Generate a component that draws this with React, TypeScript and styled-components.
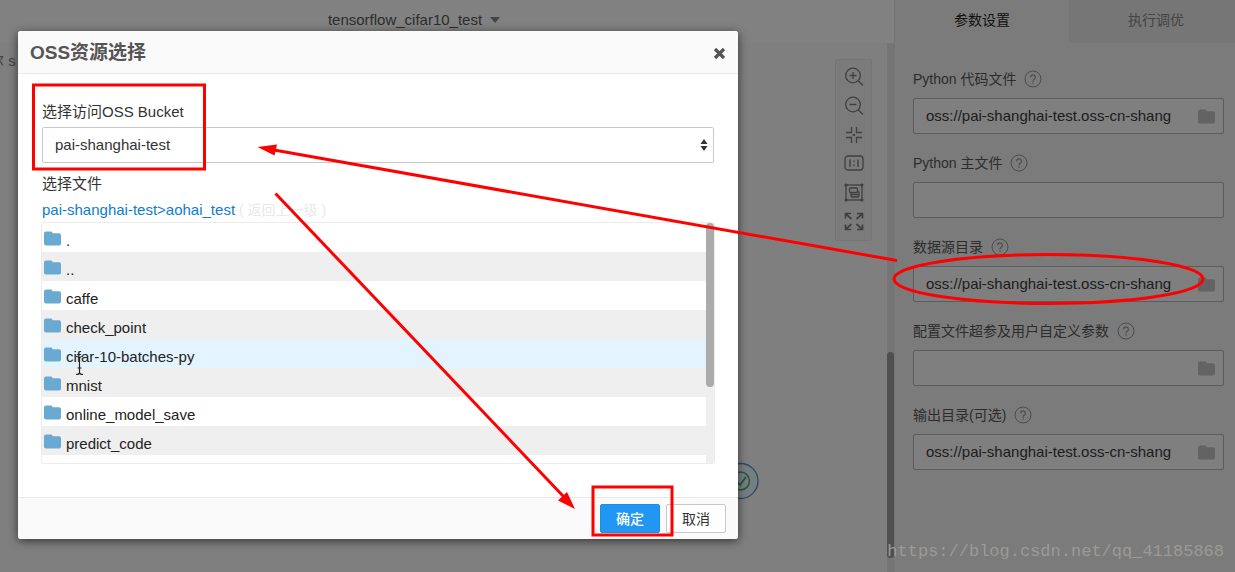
import React from "react";
import styled, { createGlobalStyle } from "styled-components";

const GlobalStyle = createGlobalStyle`
  *, *::before, *::after { box-sizing: border-box; }
  body {
    margin: 0;
    background: #7f7f7f;
    font-family: "Liberation Sans", "Noto Sans CJK SC", sans-serif;
    font-size: 15px;
    line-height: 20px;
    color: #222;
  }
  button, input, select { font: inherit; color: inherit; }
`;

const Page = styled.div`
  position: relative;
  display: flex;
  min-height: 100vh;
  overflow: hidden;
`;

/* ---------- workspace ---------- */

const Workspace = styled.main`
  flex: 1;
  min-width: 0;
  display: flex;
  flex-direction: column;
`;

const TopBar = styled.header`
  height: 43px;
  display: flex;
  align-items: center;
  justify-content: center;
  padding: 0 66px 3px 0;
  background: #818181;
`;

const ExperimentButton = styled.button`
  display: flex;
  align-items: center;
  gap: 8px;
  padding: 0;
  border: 0;
  background: none;
  color: #2c2c2c;
`;

const Caret = styled.span`
  border: 5px solid transparent;
  border-top: 6px solid #444;
  border-bottom: 0;
`;

const Canvas = styled.section`
  position: relative;
  flex: 1;
  display: flex;
  justify-content: space-between;
  align-items: stretch;
  background: #7f7f7f;
`;

const TreeLabel = styled.span`
  margin: 8px 0 0 -11px;
  color: #444;
  white-space: pre;
`;

const CanvasTools = styled.div`
  display: flex;
  gap: 15px;
`;

const Palette = styled.div`
  align-self: flex-start;
  width: 37px;
  margin-top: 16px;
  padding: 2px 0 4px;
  display: flex;
  flex-direction: column;
  background: #7b7b7b;
  border: 1px solid #757575;
  border-radius: 2px;
`;

const ToolButton = styled.button`
  height: 29px;
  display: grid;
  place-items: center;
  padding: 0;
  border: 0;
  background: none;
  color: #404040;
`;

const CanvasTrack = styled.div`
  width: 7px;
  display: flex;
  flex-direction: column;
  justify-content: flex-end;
  padding-bottom: 14px;
  background: #757575;
`;

const CanvasThumb = styled.div`
  height: 206px;
  border-radius: 4px;
  background: #4f4f4f;
`;

const NodeEnd = styled.svg`
  position: absolute;
  left: 720px;
  top: 418px;
`;

/* ---------- settings panel ---------- */

const Panel = styled.aside`
  flex: 0 0 341px;
  overflow: hidden;
  background: #7b7b7b;
  border-left: 1px solid #757575;
`;

const Tabs = styled.div`
  display: flex;
  height: 43px;
`;

const Tab = styled.button<{ $active?: boolean }>`
  flex: 0 0 174px;
  padding: 0 0 4px;
  border: 0;
  font-size: 14px;
  background: ${(p) => (p.$active ? "#7b7b7b" : "#767676")};
  color: ${(p) => (p.$active ? "#111" : "#444")};
`;

const Form = styled.form`
  display: flex;
  flex-direction: column;
  gap: 19px;
  padding: 26px 11px 30px 18px;
`;

const Field = styled.div`
  display: flex;
  flex-direction: column;
  gap: 9px;
`;

const FieldHead = styled.div`
  display: flex;
  align-items: center;
  gap: 8px;
  height: 20px;
  font-size: 14px;
  color: #2c2c2c;
`;

const InputFrame = styled.div`
  display: flex;
  align-items: center;
  height: 36px;
  padding: 0 8px 0 12px;
  background: #7f7f7f;
  border: 1px solid #5c5c5c;
  border-radius: 2px;
  color: #636363;
`;

const TextInput = styled.input`
  flex: 1;
  min-width: 0;
  padding: 0;
  border: 0;
  outline: 0;
  background: none;
  color: #1c1c1c;
`;

const Watermark = styled.div`
  position: absolute;
  right: 11px;
  bottom: 10px;
  font-family: "Liberation Mono", monospace;
  font-size: 17px;
  color: #9b9a97;
`;

/* ---------- dialog ---------- */

const Overlay = styled.div`
  position: absolute;
  inset: 0;
  padding: 31px 18px;
`;

const Dialog = styled.div`
  width: 720px;
  max-width: 100%;
  background: #fff;
  border-radius: 3px;
  box-shadow: 0 2px 10px rgba(0, 0, 0, 0.6);
  overflow: hidden;
`;

const DialogHeader = styled.header`
  display: flex;
  align-items: center;
  justify-content: space-between;
  height: 43px;
  padding: 2px 12px 0;
  background: #fafafa;
  border-bottom: 1px solid #e9e9e9;
`;

const DialogTitle = styled.h2`
  margin: 0;
  font-size: 19px;
  line-height: 24px;
  color: #555;
`;

const CloseButton = styled.button`
  display: grid;
  padding: 0;
  border: 0;
  background: none;
  color: #555;
`;

const DialogBody = styled.div`
  display: flex;
  flex-direction: column;
  padding: 28px 24px 34px;
`;

const DialogLabel = styled.label`
  margin-bottom: 5px;
  color: #333;
`;

const SelectFrame = styled.div`
  display: grid;
  margin-bottom: 11px;

  > * { grid-area: 1 / 1; }

  > svg {
    align-self: center;
    justify-self: end;
    margin-right: 6px;
    pointer-events: none;
  }
`;

const BucketSelect = styled.select`
  appearance: none;
  height: 36px;
  padding: 0 12px;
  border: 1px solid #c8c8c8;
  border-radius: 2px;
  background: #fff;
  color: #333;
`;

const PathLine = styled.div`
  display: flex;
  gap: 4px;
  margin: 1px 0 3px;
  white-space: pre;
`;

const PathLink = styled.a`
  color: #0f7ccf;
  text-decoration: none;
`;

const BackLink = styled.a`
  font-size: 14px;
  color: #e9e9e9;
  text-decoration: none;
`;

const FileBox = styled.div`
  display: flex;
  height: 240px;
  overflow: hidden;
  border-radius: 2px;
  box-shadow: 0 0 0 1px #ececec;
`;

const FileList = styled.ul`
  flex: 1;
  margin: 0;
  padding: 0;
  list-style: none;
`;

const FileRow = styled.li<{ $hover?: boolean }>`
  background: ${(p) => (p.$hover ? "#e3f4ff" : "#fff")};

  &:nth-child(even) { background: #efefef; }
`;

const FileButton = styled.button`
  display: flex;
  align-items: center;
  gap: 5px;
  width: 100%;
  height: 29px;
  padding: 6px 2px 0;
  border: 0;
  background: none;
  color: #222;

  > svg {
    margin-bottom: 5px;
    color: #6aa9d1;
  }
`;

const ListTrack = styled.div`
  width: 8px;
  background: #efefef;
`;

const ListThumb = styled.div`
  height: 164px;
  border-radius: 4px;
  background: #ababab;
`;

const DialogFooter = styled.footer`
  display: flex;
  justify-content: flex-end;
  gap: 6px;
  padding: 6px 12px;
  background: #fafafa;
  border-top: 1px solid #e9e9e9;
`;

const ActionButton = styled.button<{ $primary?: boolean }>`
  width: 60px;
  height: 29px;
  padding: 0;
  border: 1px solid ${(p) => (p.$primary ? "#1c8ee6" : "#c8c8c8")};
  border-radius: 2px;
  background: ${(p) => (p.$primary ? "#1f97f3" : "#fff")};
  color: ${(p) => (p.$primary ? "#fff" : "#333")};
  font-weight: ${(p) => (p.$primary ? 500 : 400)};
  font-size: 14px;
`;

const Markup = styled.svg`
  position: absolute;
  left: 0;
  top: 0;
  pointer-events: none;
`;

/* ---------- icons ---------- */

const FolderIcon = () => (
  <svg width="17" height="15" viewBox="0 0 17 15" fill="currentColor" aria-hidden="true">
    <path d="M2 .5h5q1 0 1.300 1l.3.7H15q2 0 2 2v8.300q0 2-2 2H2q-2 0-2-2v-10q0-2 2-2z" />
  </svg>
);

const HelpIcon = () => (
  <svg width="18" height="18" viewBox="0 0 18 18" fill="none" stroke="#4c4c4c" aria-hidden="true">
    <circle cx="9" cy="9" r="8" />
    <path d="M6.600 7.200a2.400 2.400 0 1 1 3.600 2.100c-.8.5-1.200.9-1.200 1.900" strokeWidth="1.200" />
    <circle cx="9" cy="13" r=".8" fill="#4c4c4c" stroke="none" />
  </svg>
);

const ToolSvg = ({ children }: { children: React.ReactNode }) => (
  <svg
    width="20"
    height="20"
    viewBox="0 0 20 20"
    fill="none"
    stroke="currentColor"
    strokeWidth="1.300"
    aria-hidden="true"
  >
    {children}
  </svg>
);

const tools = [
  {
    name: "放大",
    icon: (
      <>
        <circle cx="9" cy="8.500" r="7.300" />
        <path d="M14 13.500l5 5M9 5v7M5.500 8.500h7" />
      </>
    ),
  },
  {
    name: "缩小",
    icon: (
      <>
        <circle cx="9" cy="8.500" r="7.300" />
        <path d="M14 13.500l5 5M5.500 8.500h7" />
      </>
    ),
  },
  {
    name: "居中",
    icon: (
      <>
        <path d="M7.500 2v5.500H2M12.500 2v5.500H18M7.500 18v-5.500H2M12.500 18v-5.500H18" />
        <circle cx="10" cy="10" r="1.200" fill="currentColor" stroke="none" />
      </>
    ),
  },
  {
    name: "原始比例",
    icon: (
      <>
        <rect x="1" y="2" width="18" height="14" rx="3" />
        <path d="M6 5.500V13M14 5.500V13" strokeWidth="1.400" />
        <path d="M10 6.500V8M10 10.500V12" strokeWidth="1.400" />
      </>
    ),
  },
  {
    name: "适应画布",
    icon: (
      <>
        <rect x="2" y="2" width="16" height="15" />
        <rect x="5.500" y="5" width="8" height="4.500" rx="1" />
        <path d="M13.500 8.500q1.500 0 1.500 1v3.500q0 1-1 1H8q-1 0-1-1V9.500M7 11.500h8" />
        <g fill="currentColor" stroke="none">
          <circle cx="2" cy="2" r="1.600" />
          <circle cx="18" cy="2" r="1.600" />
          <circle cx="2" cy="17" r="1.600" />
          <circle cx="18" cy="17" r="1.600" />
        </g>
      </>
    ),
  },
  {
    name: "全屏",
    icon: (
      <path
        d="M1.500 6.500V1.500H7M1.500 1.500l6 5.500M13 1.500h5.500V6.500M18.500 1.500l-6 5.500M1.500 12.500v5H7M1.500 17.500l6-5.500M13 17.500h5.500v-5M18.500 17.500l-6-5.500"
        strokeWidth="1.700"
      />
    ),
  },
];

/* ---------- data ---------- */

const ossPath = "oss://pai-shanghai-test.oss-cn-shang";

const fields = [
  { id: "code", label: "Python 代码文件", value: ossPath, browse: true },
  { id: "main", label: "Python 主文件", value: "", browse: false },
  { id: "source", label: "数据源目录", value: ossPath, browse: true },
  { id: "config", label: "配置文件超参及用户自定义参数", value: "", browse: true },
  { id: "output", label: "输出目录(可选)", value: ossPath, browse: true },
];

const files = [
  ".",
  "..",
  "caffe",
  "check_point",
  "cifar-10-batches-py",
  "mnist",
  "online_model_save",
  "predict_code",
];

export default function App() {
  return (
    <Page>
      <GlobalStyle />
      <Workspace>
        <TopBar>
          <ExperimentButton>
            tensorflow_cifar10_test
            <Caret />
          </ExperimentButton>
        </TopBar>
        <Canvas>
          <TreeLabel>尔 s</TreeLabel>
          <NodeEnd width="40" height="40" viewBox="0 0 40 40" fill="none" aria-hidden="true">
            <circle cx="20.500" cy="20" r="17.500" fill="#777e82" stroke="#264d66" strokeWidth="1.300" />
            <circle cx="20.500" cy="20" r="9" stroke="#22593d" strokeWidth="1.500" />
            <path d="M16 20l4 4 6-8" stroke="#22593d" strokeWidth="1.800" />
          </NodeEnd>
          <CanvasTools>
            <Palette>
              {tools.map((t) => (
                <ToolButton key={t.name} aria-label={t.name}>
                  <ToolSvg>{t.icon}</ToolSvg>
                </ToolButton>
              ))}
            </Palette>
            <CanvasTrack>
              <CanvasThumb />
            </CanvasTrack>
          </CanvasTools>
        </Canvas>
      </Workspace>

      <Panel>
        <Tabs>
          <Tab $active>参数设置</Tab>
          <Tab>执行调优</Tab>
        </Tabs>
        <Form>
          {fields.map((f) => (
            <Field key={f.id}>
              <FieldHead>
                <label htmlFor={f.id}>{f.label}</label>
                <HelpIcon />
              </FieldHead>
              <InputFrame>
                <TextInput id={f.id} type="text" defaultValue={f.value} />
                {f.browse && <FolderIcon />}
              </InputFrame>
            </Field>
          ))}
        </Form>
      </Panel>
      <Watermark>https://blog.csdn.net/qq_41185868</Watermark>

      <Overlay>
        <Dialog role="dialog" aria-labelledby="dialog-title">
          <DialogHeader>
            <DialogTitle id="dialog-title">OSS资源选择</DialogTitle>
            <CloseButton aria-label="关闭">
              <svg width="13" height="13" viewBox="0 0 13 13" stroke="currentColor" strokeWidth="3.200">
                <path d="M2 2l9 9M11 2l-9 9" />
              </svg>
            </CloseButton>
          </DialogHeader>
          <DialogBody>
            <DialogLabel htmlFor="bucket">选择访问OSS Bucket</DialogLabel>
            <SelectFrame>
              <BucketSelect id="bucket" defaultValue="pai-shanghai-test">
                <option>pai-shanghai-test</option>
              </BucketSelect>
              <svg width="8" height="12" viewBox="0 0 8 12" fill="#333" aria-hidden="true">
                <path d="M4 0l3.500 5h-7zM4 12L.5 7h7z" />
              </svg>
            </SelectFrame>
            <DialogLabel as="div">选择文件</DialogLabel>
            <PathLine>
              <PathLink href="#path">pai-shanghai-test&gt;aohai_test</PathLink>
              <BackLink href="#up">( 返回上一级 )</BackLink>
            </PathLine>
            <FileBox>
              <FileList>
                {files.map((name) => (
                  <FileRow key={name} $hover={name === "cifar-10-batches-py"}>
                    <FileButton>
                      <FolderIcon />
                      {name}
                    </FileButton>
                  </FileRow>
                ))}
              </FileList>
              <ListTrack>
                <ListThumb />
              </ListTrack>
            </FileBox>
          </DialogBody>
          <DialogFooter>
            <ActionButton $primary>确定</ActionButton>
            <ActionButton>取消</ActionButton>
          </DialogFooter>
        </Dialog>
      </Overlay>

      <Markup width="1235" height="572" viewBox="0 0 1235 572" fill="none" aria-hidden="true">
        <g stroke="#f00" strokeWidth="3">
          <rect x="33.500" y="85" width="171" height="84" />
          <rect x="593" y="487" width="79" height="48" />
          <path d="M897 260.500L274 150" />
          <path d="M275.500 193.500L564 497" />
          <ellipse cx="1048.500" cy="279" rx="154.500" ry="24.500" />
        </g>
        <path d="M257.500 147l19.500-2.500-2.500 11zM575 509l-17-8.500 9-8.500z" fill="#f00" />
        <path d="M76 356.500q3.500 0 3.500 2v14q0 2-3.500 2M83 356.500q-3.500 0-3.500 2v14q0 2 3.500 2M77.500 368h4" stroke="#222" strokeWidth="1.200" />
      </Markup>
    </Page>
  );
}
